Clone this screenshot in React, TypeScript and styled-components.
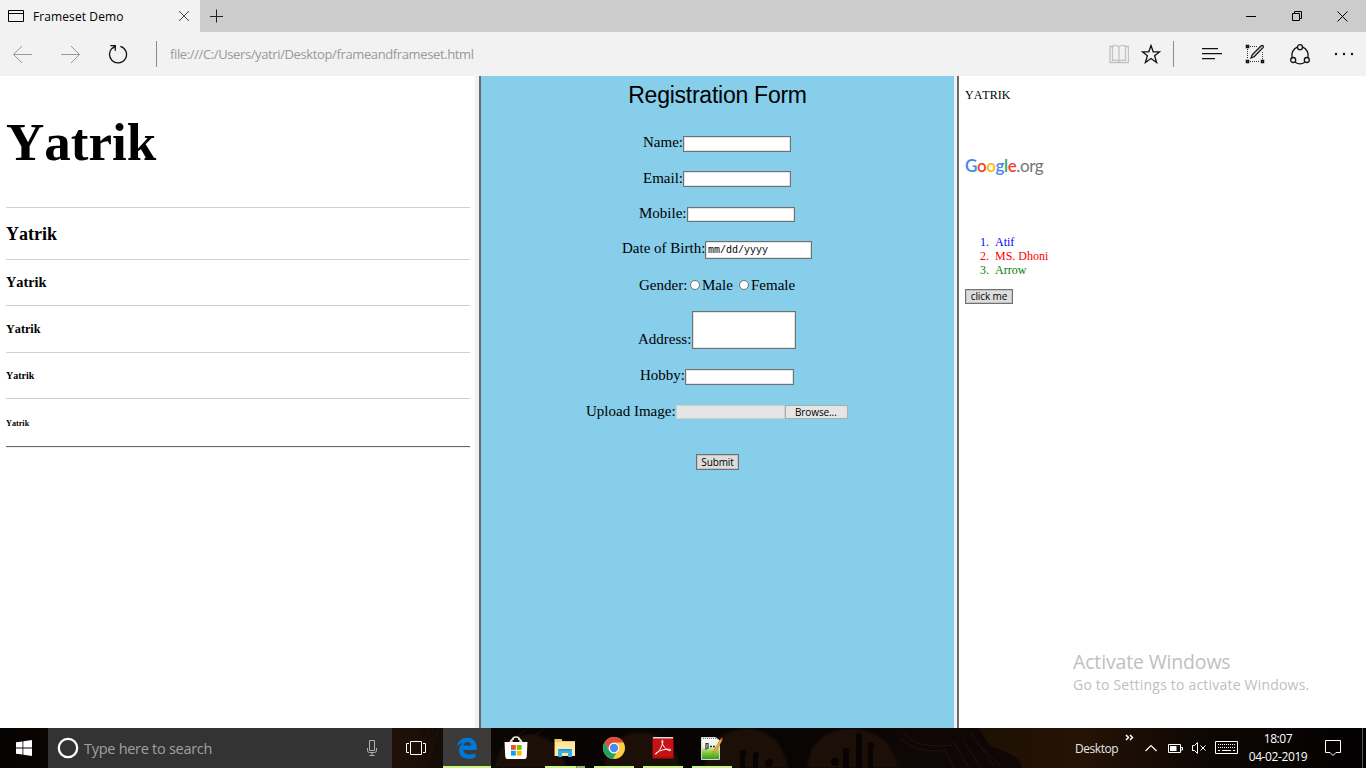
import React from "react";
import styled, { createGlobalStyle } from "styled-components";

const ui = `"Segoe UI", "Open Sans", "Noto Sans", sans-serif`;
const serif = `"Liberation Serif", "Times New Roman", serif`;
const arial = `"Liberation Sans", Arial, sans-serif`;

const GlobalStyle = createGlobalStyle`
  * { box-sizing: border-box; }
  html, body { margin: 0; padding: 0; background: #fff; overflow: hidden; }
  svg { display: block; flex: none; }
`;

const Screen = styled.div`
  position: relative;
  display: flex;
  flex-direction: column;
  width: 1366px;
  height: 768px;
  overflow: hidden;
  font-family: ${ui};
`;

/* ---------- browser chrome ---------- */
const TabStrip = styled.header`
  display: flex;
  height: 32px;
  background: #cccccc;
`;
const Tab = styled.div`
  display: flex;
  align-items: center;
  width: 200px;
  padding: 0 10px 0 8px;
  background: #f2f2f2;
`;
const TabTitle = styled.span`
  flex: 1;
  margin: 1px 0 0 9px;
  font-size: 12px;
  line-height: 31px;
  letter-spacing: 0.1px;
  color: #000;
  white-space: nowrap;
`;
const NewTab = styled.div`
  display: flex;
  align-items: center;
  padding-left: 10px;
`;
const WindowControls = styled.div`
  display: flex;
  margin-left: auto;
`;
const WindowButton = styled.div`
  display: flex;
  align-items: center;
  justify-content: center;
  width: 46px;
`;
const Toolbar = styled.nav`
  display: flex;
  align-items: center;
  height: 44px;
  padding-left: 12px;
  background: #f2f2f2;
`;
const ToolSlot = styled.div<{ $w: number }>`
  display: flex;
  width: ${(p) => p.$w}px;
`;
const Divider = styled.div<{ $right: number }>`
  width: 1px;
  height: 26px;
  margin-right: ${(p) => p.$right}px;
  background: #8c8c8c;
`;
const Address = styled.span`
  flex: 1;
  font-size: 13px;
  letter-spacing: -0.38px;
  line-height: 44px;
  color: #999;
  white-space: nowrap;
`;

/* ---------- frameset ---------- */
const Frameset = styled.main`
  display: flex;
  height: 652px;
  font-family: ${serif};
  color: #000;
`;
const FrameBorder = styled.div<{ $light: number }>`
  width: ${(p) => p.$light + 2}px;
  border-right: 2px solid #696969;
  background: #f0f0f0;
`;
const HeadingsFrame = styled.section`
  width: 475px;
  padding: 0 5px 0 6px;
  background: #fff;
  font-kerning: none;
`;
const HeadingRow = styled.div<{ $h: number; $size: number; $drop: number; $last?: boolean }>`
  display: flex;
  align-items: center;
  height: ${(p) => p.$h + 1}px;
  padding-top: ${(p) => p.$drop}px;
  border-bottom: 1px solid ${(p) => (p.$last ? "#696969" : "#cfcfcf")};
  box-shadow: ${(p) => (p.$last ? "0 1px 0 #eeeeee" : "none")};
  font-size: ${(p) => p.$size}px;
  font-weight: bold;
  line-height: 1;
`;
const FormFrame = styled.section`
  width: 473px;
  padding-right: 1px;
  background: #87ceeb;
`;
const FormTitle = styled.div`
  height: 57px;
  padding: 4px 0 0 1px;
  font-family: ${arial};
  font-size: 23px;
  line-height: 30px;
  letter-spacing: -0.25px;
  text-align: center;
`;
const FormRow = styled.div<{ $h: number }>`
  display: flex;
  align-items: flex-start;
  justify-content: center;
  height: ${(p) => p.$h}px;
`;
const Label = styled.label<{ $w: number; $drop?: number }>`
  width: ${(p) => p.$w}px;
  margin-top: ${(p) => p.$drop ?? 0}px;
  font-size: 15px;
  line-height: 18px;
  white-space: nowrap;
`;
const TextBox = styled.div<{ $w: number; $h: number; $drop?: number }>`
  width: ${(p) => p.$w}px;
  height: ${(p) => p.$h}px;
  margin-top: ${(p) => p.$drop ?? 0}px;
  padding-left: 2px;
  border: 1px solid #707070;
  background: #fff;
  box-shadow: inset 0 0 0 1px #e3e3e3;
  font-family: "Liberation Mono", "Courier New", monospace;
  font-size: 10px;
  line-height: 18px;
  white-space: nowrap;
`;
const Radio = styled.span`
  width: 10px;
  height: 10px;
  margin: 4px 2px 0 0;
  border: 1px solid #707070;
  border-radius: 50%;
  background: #fff;
`;
const FileBox = styled.div`
  width: 109px;
  height: 14px;
  margin-top: 3px;
  border: 1px solid #cfcfcf;
  background: #e5e5e5;
`;
const Browse = styled.div`
  width: 63px;
  height: 14px;
  margin-top: 3px;
  border: 1px solid #adadad;
  background: #e5e5e5;
  font-family: ${ui};
  font-size: 10px;
  letter-spacing: -0.1px;
  line-height: 13px;
  padding-left: 9px;
`;
const PushButton = styled.div<{ $w: number; $h: number }>`
  width: ${(p) => p.$w}px;
  height: ${(p) => p.$h}px;
  border: 1px solid #707070;
  box-shadow: inset 0 0 0 1px #c4c4c4;
  background: #dddddd;
  font-family: ${ui};
  font-size: 10px;
  letter-spacing: -0.1px;
  line-height: ${(p) => p.$h - 2}px;
  text-align: center;
  white-space: nowrap;
`;
const SubmitButton = styled(PushButton)`
  margin-left: 1px;
`;
const MiscFrame = styled.section`
  flex: 1;
  padding: 10px 0 0 6px;
  background: #fff;
  font-size: 12px;
`;
const Name = styled.div`
  height: 68px;
  line-height: 18px;
  font-size: 12px;
  font-kerning: none;
`;
const GoogleOrg = styled.div`
  height: 81px;
  font-family: Lato, "Open Sans", sans-serif;
  font-size: 17px;
  line-height: 24px;
  letter-spacing: -0.4px;
  color: #757575;
`;
const Letter = styled.span<{ $c: string }>`
  color: ${(p) => p.$c};
  font-weight: 600;
`;
const NameList = styled.ol`
  margin: 0 0 12px;
  padding: 0 0 0 15px;
  list-style: none;
  counter-reset: person;
  line-height: 14px;
`;
const NameItem = styled.li<{ $c: string }>`
  display: flex;
  color: ${(p) => p.$c};
  &::before {
    counter-increment: person;
    content: counter(person) ".";
    width: 15px;
  }
`;
const Activate = styled.div`
  position: absolute;
  left: 1073px;
  top: 648px;
  color: #c0c0c0;
  white-space: nowrap;
`;
const ActivateTitle = styled.div`
  font-size: 19.5px;
  line-height: 28px;
  letter-spacing: -0.16px;
`;
const ActivateNote = styled.div`
  font-size: 14px;
  line-height: 18px;
  letter-spacing: 0.2px;
`;

/* ---------- taskbar ---------- */
const Taskbar = styled.footer`
  position: relative;
  display: flex;
  height: 40px;
  background: #060303;
`;
const Backdrop = styled.div`
  position: absolute;
  inset: 0;
`;
const TaskCell = styled.div<{ $w: number; $bg?: string; $mr?: number }>`
  position: relative;
  display: flex;
  align-items: center;
  justify-content: center;
  width: ${(p) => p.$w}px;
  margin-right: ${(p) => p.$mr ?? 0}px;
  background: ${(p) => p.$bg ?? "transparent"};
`;
const RunningMark = styled.i<{ $full?: boolean; $stacked?: boolean }>`
  position: absolute;
  bottom: 0;
  left: ${(p) => (p.$full ? 0 : 4)}px;
  right: ${(p) => (p.$full ? 0 : 4)}px;
  height: 2px;
  background: ${(p) =>
    p.$stacked ? "linear-gradient(90deg, #c9f57f 31px, #6f8d4d 31px, #6f8d4d 32px, #94b768 32px)" : "#c9f57f"};
`;
const Search = styled.div`
  position: relative;
  display: flex;
  align-items: center;
  width: 344px;
  padding: 0 13px 0 8px;
  background: #333333;
`;
const SearchHint = styled.span`
  flex: 1;
  margin: 1px 0 0 5px;
  font-size: 14.5px;
  letter-spacing: -0.28px;
  line-height: 39px;
  color: #a0a0a0;
  white-space: nowrap;
`;
const Tray = styled.div`
  position: relative;
  display: flex;
  align-items: center;
  margin-left: auto;
  width: 291px;
  color: #fff;
`;
const DesktopLabel = styled.span`
  width: 50px;
  font-size: 12px;
  letter-spacing: -0.45px;
  color: #e6e6e6;
`;
const Clock = styled.div`
  width: 76px;
  padding-left: 2px;
  font-size: 12px;
  line-height: 18px;
  letter-spacing: -0.4px;
  text-align: center;
  white-space: nowrap;
`;

const HEADINGS = [
  { h: 131, size: 53, drop: 2 },
  { h: 51, size: 18, drop: 1 },
  { h: 45, size: 14.3, drop: 0 },
  { h: 46, size: 12.2, drop: 0 },
  { h: 45, size: 10, drop: 0 },
  { h: 47, size: 8.2, drop: 3 },
];

function BrowserChrome() {
  return (
    <>
      <TabStrip>
        <Tab>
          <svg width="16" height="14" fill="none" stroke="#000">
            <path d="M.5 1.5h15v11H.5zM.5 4.5h15" />
          </svg>
          <TabTitle>Frameset Demo</TabTitle>
          <svg width="12" height="12" fill="none" stroke="#444">
            <path d="M1 1l10 10M11 1L1 11" />
          </svg>
        </Tab>
        <NewTab>
          <svg width="14" height="14" fill="none" stroke="#222">
            <path d="M6.500 .5v13M0 7.500h13" />
          </svg>
        </NewTab>
        <WindowControls>
          <WindowButton>
            <svg width="10" height="10"><path d="M0 5.500h10" stroke="#000" /></svg>
          </WindowButton>
          <WindowButton>
            <svg width="10" height="10" fill="none" stroke="#000">
              <path d="M.5 2.500h7v7h-7zM2.500 2.500v-2h7v7h-2" />
            </svg>
          </WindowButton>
          <WindowButton>
            <svg width="12" height="11" fill="none" stroke="#000"><path d="M.5 .5l10 10M10.500 .5l-10 10" /></svg>
          </WindowButton>
        </WindowControls>
      </TabStrip>
      <Toolbar>
        <ToolSlot $w={48}>
          <svg width="20" height="18" fill="none" stroke="#999"><path d="M1.500 9.500h18.500M10 1L1.500 9.500L10 18" /></svg>
        </ToolSlot>
        <ToolSlot $w={48}>
          <svg width="20" height="18" fill="none" stroke="#999"><path d="M1 9.500h18.500M11 1l8.500 8.500L11 18" /></svg>
        </ToolSlot>
        <ToolSlot $w={48}>
          <svg width="20" height="20" fill="none" stroke="#111" strokeWidth="1.300">
            <path d="M12.400 2.300A8.500 8.500 0 1 1 5.600 3.200M2.300 1.700h5v5M7.300 1.700L4.500 4.500" />
          </svg>
        </ToolSlot>
        <Divider $right={13} />
        <Address>file:///C:/Users/yatri/Desktop/frameandframeset.html</Address>
        <ToolSlot $w={32}>
          <svg width="20" height="20" fill="none" stroke="#c2c2c2" strokeWidth="1.300">
            <path d="M3.500 2.500H1v16h18.500v-16H17M10 3C8.500 1.500 5.500 1.300 3.500 1.800v14.500c2-.6 5-.3 6.500 1c1.500-1.300 4.500-1.600 6.500-1V1.800C14.500 1.300 11.500 1.500 10 3v14.500" />
          </svg>
        </ToolSlot>
        <ToolSlot $w={32}>
          <svg width="20" height="20" fill="none" stroke="#111" strokeWidth="1.300">
            <path d="M10 1.500l2.200 6.300h6.500l-5.100 4l2 6.700L10 14.500l-5.600 4l2-6.700l-5.100-4h6.500z" />
          </svg>
        </ToolSlot>
        <Divider $right={28} />
        <ToolSlot $w={43}>
          <svg width="20" height="12" fill="#111">
            <path d="M0 0h16v1.200H0zM0 5h20v1.200H0zM0 10h13v1.200H0z" />
          </svg>
        </ToolSlot>
        <ToolSlot $w={45}>
          <svg width="20" height="20" fill="none" stroke="#111">
            <path d="M5 2.500h8M2.500 5v10M17.500 8v8M5 17.500h10" strokeDasharray="1 1" stroke="#333" />
            <path d="M1.500 1.500h2v2h-2zM1.500 16.500h2v2h-2zM16.500 16.500h2v2h-2z" strokeWidth="1.500" />
            <path d="M6 14l1.300-3.300L16.200 1.800q1-.8 1.900 0q.8 1 0 1.900L9.200 12.700z" strokeWidth="1.200" fill="#ccc" />
          </svg>
        </ToolSlot>
        <ToolSlot $w={44}>
          <svg width="20" height="21" fill="none" stroke="#111" strokeWidth="1.300">
            <path d="M7.300 3.200A8.300 8.300 0 0 0 2.300 13.500M12.700 3.200A8.300 8.300 0 0 1 17.700 13.500M5.200 18.200a8.500 8.500 0 0 0 9.600 0" />
            <circle cx="10" cy="3.200" r="2.500" />
            <circle cx="3.200" cy="16" r="2.500" />
            <circle cx="16.800" cy="16" r="2.500" />
          </svg>
        </ToolSlot>
        <ToolSlot $w={32}>
          <svg width="20" height="4" fill="#111">
            <circle cx="2" cy="2" r="1.200" /><circle cx="10" cy="2" r="1.200" /><circle cx="18" cy="2" r="1.200" />
          </svg>
        </ToolSlot>
      </Toolbar>
    </>
  );
}

function RegistrationForm() {
  return (
    <FormFrame>
      <FormTitle>Registration Form</FormTitle>
      <FormRow $h={36}><Label $w={40}>Name:</Label><TextBox $w={108} $h={16} $drop={3} /></FormRow>
      <FormRow $h={35}><Label $w={40}>Email:</Label><TextBox $w={108} $h={16} $drop={2} /></FormRow>
      <FormRow $h={35}><Label $w={48}>Mobile:</Label><TextBox $w={108} $h={15} $drop={3} /></FormRow>
      <FormRow $h={37}>
        <Label $w={83}>Date of Birth:</Label>
        <TextBox $w={107} $h={18} $drop={2}>mm/dd/yyyy</TextBox>
      </FormRow>
      <FormRow $h={35}>
        <Label $w={51}>Gender:</Label>
        <Radio /><Label $w={37}>Male</Label>
        <Radio /><Label $w={44}>Female</Label>
      </FormRow>
      <FormRow $h={55}><Label $w={54} $drop={19}>Address:</Label><TextBox $w={104} $h={38} /></FormRow>
      <FormRow $h={36}><Label $w={45}>Hobby:</Label><TextBox $w={109} $h={16} $drop={3} /></FormRow>
      <FormRow $h={52}><Label $w={90}>Upload Image:</Label><FileBox /><Browse>Browse...</Browse></FormRow>
      <FormRow $h={16}><SubmitButton $w={43} $h={16}>Submit</SubmitButton></FormRow>
    </FormFrame>
  );
}

function WallpaperStrip() {
  return (
    <Backdrop>
      <svg width="1366" height="40">
        <defs>
          <linearGradient id="glow">
            <stop offset="0" stopColor="#050302" />
            <stop offset=".28" stopColor="#241307" />
            <stop offset=".33" stopColor="#120a06" />
            <stop offset=".38" stopColor="#070403" />
            <stop offset=".64" stopColor="#090504" />
            <stop offset=".7" stopColor="#1c0f05" />
            <stop offset=".79" stopColor="#251305" />
            <stop offset=".88" stopColor="#0e0704" />
            <stop offset="1" stopColor="#020101" />
          </linearGradient>
        </defs>
        <rect width="1366" height="40" fill="url(#glow)" />
        <g fill="#1b0f07" stroke="#120a06" strokeWidth="2">
          <path d="M494 40q6-32 36-34q32 4 36 34zM604 40q2-34 38-36q34 4 38 36zM704 40q6-38 44-40q34 4 40 40zM808 40q0-36 42-40q42 2 48 40z" />
        </g>
        <g fill="#090403">
          <path d="M740 40V26h5v14zM753 40V28h5v12zM843 40V24h6v16zM856 40V10h6v30zM868 40V18h5v22z" />
          <circle cx="743" cy="25" r="3" /><circle cx="756" cy="27" r="3" /><circle cx="769" cy="35" r="4" />
          <circle cx="846" cy="23" r="3" /><circle cx="859" cy="8" r="3" /><circle cx="871" cy="17" r="3" /><circle cx="835" cy="34" r="4" />
        </g>
        <path d="M890 0h88l12 18l20 8q10 4 12 14H905z" fill="#0e0705" />
        <g fill="none" stroke="#20140d">
          <path d="M904 4q12 18 48 13M900 10q12 14 42 13M970 4l24 34M962 10l19 30M953 13l16 27M944 20l10 20M981 18l20 21" />
          <path d="M430 0l-18 40M439 0l-14 40M421 0q-10 22-28 40M503 40q8-20 40-38M496 38q10-25 30-36" />
        </g>
      </svg>
    </Backdrop>
  );
}

function TaskbarArea() {
  return (
    <Taskbar>
      <WallpaperStrip />
      <TaskCell $w={48}>
        <svg width="16" height="16" fill="#fff">
          <path d="M0 2.300l6.500-.9v6.200H0zM7.300 1.300L16 0v7.600H7.300zM0 8.400h6.500v6.200L0 13.700zM7.300 8.400H16V16l-8.700-1.300z" />
        </svg>
      </TaskCell>
      <Search>
        <svg width="23" height="22" fill="none"><circle cx="12" cy="11" r="9.200" stroke="#fff" strokeWidth="2.300" /></svg>
        <SearchHint>Type here to search</SearchHint>
        <svg width="13" height="18" fill="none" stroke="#b0b0b0">
          <path d="M3.500 1.500h5v10h-5zM1.500 9v2.500q0 2 2 2h5q2 0 2-2V9M6 13.500V16M3.500 16.500h5" />
        </svg>
      </Search>
      <TaskCell $w={48} $mr={3}>
        <svg width="20" height="16" fill="none" stroke="#fff">
          <path d="M4.500 1.500h11v13h-11zM3 3.500H.5v9H3M17 3.500h2.500v9H17" />
        </svg>
      </TaskCell>
      <TaskCell $w={48} $bg="#3d3a3a" $mr={1}>
        <svg width="22" height="22">
          <path d="M1 9.500C2 4 6 .7 11.300.7c6 0 9.500 4.300 9.500 9.800V13H7.300c.2 3.200 3 4.600 6 4.600 2.300 0 4.400-.6 6.200-1.700v4.300c-2 1-4.500 1.500-7 1.500C6.500 21.700 3 18.500 3 13.300c0-3 1.700-6 4.600-7.600C4.500 6 2.300 7.600 1 9.500zM7.500 8.600h7.600c0-2-1-3.500-3.600-3.500S7.700 6.800 7.500 8.600z" fill="#0078d7" fillRule="evenodd" />
        </svg>
        <RunningMark $full />
      </TaskCell>
      <TaskCell $w={48} $mr={1}>
        <svg width="24" height="24">
          <path d="M8 7V5q0-4 4-4t4 4v2M6 6.500Q7 3 10 3M18 6.500Q17 3 14 3" fill="none" stroke="#e8e8e8" strokeWidth="1.300" />
          <path d="M.5 6h23l-.8 15q-.2 2-2 2H3.300q-1.800 0-2-2z" fill="#fff" />
          <path d="M7 9h4.800v4.800H7z" fill="#f25022" /><path d="M12.800 9h4.800v4.800h-4.800z" fill="#7fba00" />
          <path d="M7 14.800h4.800v4.800H7z" fill="#00a4ef" /><path d="M12.800 14.800h4.800v4.800h-4.800z" fill="#ffb900" />
        </svg>
      </TaskCell>
      <TaskCell $w={48} $mr={1}>
        <svg width="22" height="20">
          <path d="M.5 1h7l1 2h12.500v15H.5z" fill="#f4c85a" />
          <path d="M1 4h20v14H1z" fill="#ffe9a2" />
          <path d="M4 19v-8h14v8h-4v-4H8v4z" fill="#36b0ea" /><path d="M5 11h12v1.500H5z" fill="#1b93d2" />
        </svg>
        <RunningMark $stacked />
      </TaskCell>
      <TaskCell $w={48} $mr={1}>
        <svg width="22" height="22" viewBox="0 0 22 22">
          <circle cx="11" cy="11" r="11" fill="#ffcd40" />
          <path d="M1.500 5.500A11 11 0 0 1 20.500 5.500H11a5.500 5.500 0 0 0-5.200 7z" fill="#df4a3c" />
          <path d="M1.500 5.500L6.300 13.800a5.500 5.500 0 0 0 7 2.200L10 22A11 11 0 0 1 1.500 5.500z" fill="#1da362" />
          <circle cx="11" cy="11" r="5.300" fill="#fff" /><circle cx="11" cy="11" r="4.200" fill="#4a8bf5" />
        </svg>
        <RunningMark />
      </TaskCell>
      <TaskCell $w={48} $mr={1}>
        <svg width="22" height="22">
          <path d="M.5.5h21v21H.5z" fill="#b60e10" /><path d="M1 0h20v1.500H1z" fill="#d9d9d9" /><path d="M1 2h20v17H1z" fill="#c61214" />
          <path d="M4 17c2.500-1.500 6-7 7-12.500c.2-1.500-1.400-1.500-1.200 0c.7 4 4 8.500 8 9.200c1.500 0 1.300-1.500-.2-1.500c-5-.2-9 1-13 3.300c-1.400 1-1.500 2-.6 1.500z" fill="none" stroke="#fff" strokeWidth="1" />
        </svg>
        <RunningMark />
      </TaskCell>
      <TaskCell $w={48}>
        <svg width="22" height="24" viewBox="1 0 22 24">
          <defs>
            <linearGradient id="page" x2="0" y2="1">
              <stop offset="0" stopColor="#fafafa" /><stop offset=".4" stopColor="#eef3e6" />
              <stop offset=".65" stopColor="#8ed13e" /><stop offset="1" stopColor="#2f981b" />
            </linearGradient>
          </defs>
          <path d="M1.500 1.500h14l4 3v19h-18z" fill="url(#page)" stroke="#d5d5d5" />
          <path d="M3 2.500h13" stroke="#777" strokeDasharray="1 1" />
          <path d="M6 14V7.500h2V13" fill="none" stroke="#333" strokeWidth="1.200" />
          <path d="M10 10.500h5" stroke="#333" strokeWidth="1.500" strokeDasharray="2 1" />
          <path d="M20.500 3l1.800 1l-6.500 12l-2.800 2.500l.5-3.500z" fill="#f2ad2c" stroke="#9f7120" strokeWidth=".5" />
          <path d="M20.500 3l1-1.800l1.600 1l-.8 1.800z" fill="#b13b3b" />
        </svg>
        <RunningMark />
      </TaskCell>
      <Tray>
        <DesktopLabel>Desktop</DesktopLabel>
        <svg width="9" height="30" fill="none" stroke="#fff" strokeWidth="1.500">
          <path d="M1 2l2.500 2.500L1 7M5 2l2.500 2.500L5 7" />
        </svg>
        <svg width="34" height="16" fill="none" stroke="#fff" strokeWidth="1.200"><path d="M11.500 11l5.500-5.500l5.500 5.500" /></svg>
        <svg width="24" height="16" fill="none" stroke="#fff">
          <path d="M.5 4.500h12v8h-12zM13 7.500h1.500v2.500H13" /><path d="M2 6h6.500v5H2z" fill="#fff" stroke="none" />
        </svg>
        <svg width="23" height="16" fill="none" stroke="#fff">
          <path d="M5.500 2.500v11L2.500 10.500H-.5M.5 10.500v-5h2l3-3M8.500 5.500l5 5M13.500 5.500l-5 5" />
        </svg>
        <svg width="24" height="16" fill="none" stroke="#fff">
          <path d="M.5 1.500h22v12H.5z" />
          <path d="M3 4.500h17M3 7.500h17" strokeDasharray="1 1" />
          <path d="M3 10.500h2M7 10.500h9M18 10.500h2" />
        </svg>
        <Clock>18:07<br />04-02-2019</Clock>
        <svg width="46" height="20" fill="none" stroke="#fff">
          <path d="M10.500 2.500h15v12h-4.500l-3 3l-3-3h-4.500z" />
        </svg>
        <svg width="5" height="40"><path d="M1.500 0v40" stroke="#555" /></svg>
      </Tray>
    </Taskbar>
  );
}

export default function App() {
  return (
    <Screen>
      <GlobalStyle />
      <BrowserChrome />
      <Frameset>
        <HeadingsFrame>
          {HEADINGS.map((item, i) => (
            <HeadingRow
              key={item.size}
              $h={item.h}
              $size={item.size}
              $drop={item.drop}
              $last={i === HEADINGS.length - 1}
            >
              Yatrik
            </HeadingRow>
          ))}
        </HeadingsFrame>
        <FrameBorder $light={4} />
        <RegistrationForm />
        <FrameBorder $light={3} />
        <MiscFrame>
          <Name>YATRIK</Name>
          <GoogleOrg>
            <Letter $c="#4285f4">G</Letter><Letter $c="#ea4335">o</Letter><Letter $c="#fbbc05">o</Letter>
            <Letter $c="#4285f4">g</Letter><Letter $c="#34a853">l</Letter><Letter $c="#ea4335">e</Letter>.org
          </GoogleOrg>
          <NameList>
            <NameItem $c="blue">Atif</NameItem>
            <NameItem $c="red">MS. Dhoni</NameItem>
            <NameItem $c="green">Arrow</NameItem>
          </NameList>
          <PushButton $w={48} $h={15}>click me</PushButton>
        </MiscFrame>
      </Frameset>
      <TaskbarArea />
      <Activate>
        <ActivateTitle>Activate Windows</ActivateTitle>
        <ActivateNote>Go to Settings to activate Windows.</ActivateNote>
      </Activate>
    </Screen>
  );
}
